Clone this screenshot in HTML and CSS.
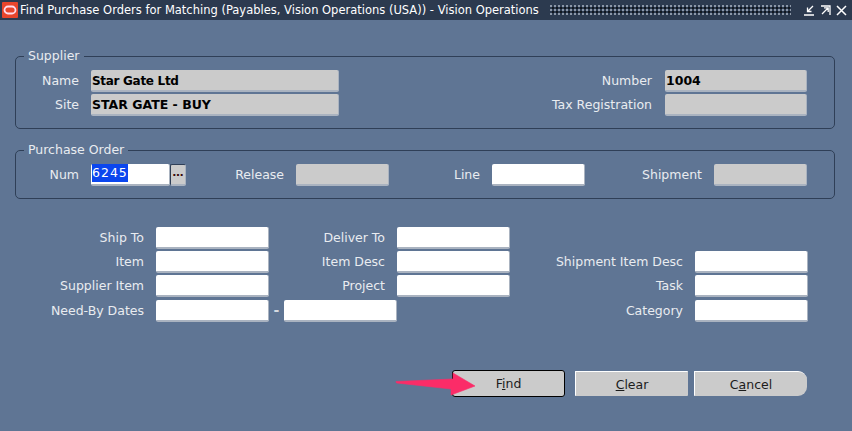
FILE: index.html
```html
<!DOCTYPE html>
<html lang="en">
<head>
<meta charset="utf-8">
<title>Find Purchase Orders for Matching</title>
<link rel="stylesheet" href="styles.css">
</head>
<body>
<div class="window">
  <header class="titlebar">
    <svg class="logo" width="16" height="16" viewBox="0 0 16 16"><rect width="16" height="16" rx="1" fill="#e8452c"/><rect x="2.500" y="4.500" width="11" height="7" rx="3.500" fill="none" stroke="#fde" stroke-width="1.800"/></svg>
    <span class="title">Find Purchase Orders for Matching (Payables, Vision Operations (USA)) - Vision Operations</span>
    <div class="grip"></div>
    <div class="winctl">
      <svg width="11" height="11" viewBox="0 0 11 11"><path d="M0 10h10M9 1L4 6M3.500 2.500v4h4" fill="none" stroke="#fff" stroke-width="1.300"/></svg>
      <svg width="11" height="11" viewBox="0 0 11 11"><path d="M1 1h9v9M2 9l6-6M4 2.800h4.200V7" fill="none" stroke="#fff" stroke-width="1.300"/></svg>
      <svg width="11" height="11" viewBox="0 0 11 11"><path d="M1 1l9 9M10 1l-9 9" fill="none" stroke="#fff" stroke-width="1.500"/></svg>
    </div>
  </header>
  <main class="content">
    <fieldset class="group supplier">
      <legend>Supplier</legend>
      <div class="group-grid">
        <label>Name</label><div class="field ro bold mixed">Star Gate Ltd</div>
        <label class="right-label">Number</label><div class="field ro bold">1004</div>
        <label>Site</label><div class="field ro bold">STAR GATE - BUY</div>
        <label class="right-label">Tax Registration</label><div class="field ro"></div>
      </div>
    </fieldset>
    <fieldset class="group po">
      <legend>Purchase Order</legend>
      <div class="po-row">
        <label class="l-num">Num</label>
        <div class="field num"><span class="sel">6245</span></div>
        <div class="lov">&#8230;</div>
        <label class="l-release">Release</label>
        <div class="field ro short"></div>
        <label class="l-line">Line</label>
        <div class="field short"></div>
        <label class="l-ship">Shipment</label>
        <div class="field ro short"></div>
      </div>
    </fieldset>
    <section class="criteria">
      <label>Ship To</label><div class="field"></div>
      <label>Deliver To</label><div class="field"></div>
      <span></span><span></span>
      <label>Item</label><div class="field"></div>
      <label>Item Desc</label><div class="field"></div>
      <label>Shipment Item Desc</label><div class="field"></div>
      <label>Supplier Item</label><div class="field"></div>
      <label>Project</label><div class="field"></div>
      <label>Task</label><div class="field"></div>
      <label class="dates">Need-By Dates</label><div class="field dates"></div>
      <div class="date-to"><span class="dash">-</span><div class="field"></div></div>
      <label class="dates">Category</label><div class="field dates"></div>
    </section>
    <div class="actions">
      <button class="btn default"><span>F<u>i</u>nd</span></button>
      <button class="btn"><span><u>C</u>lear</span></button>
      <button class="btn cancel"><span>C<u>a</u>ncel</span></button>
    </div>
  </main>
  <svg class="arrow" width="90" height="32" viewBox="0 0 90 32"><path d="M5 9.500L62 7 62 1 84 14 60 23 60 17 5.500 11z" fill="#fb2c68" stroke="#fb2c68" stroke-width="0.600" stroke-linejoin="round"/></svg>
</div>
</body>
</html>
```
FILE: styles.css
```css
* { box-sizing: border-box; }
html, body { margin: 0; height: 100%; }
body { background: #5f7594; font-family: "DejaVu Sans", sans-serif; font-size: 12px; color: #e9ecf0; overflow: hidden; }
.window { position: relative; width: 852px; height: 431px; background: #5f7594; }
.titlebar { display: flex; align-items: center; height: 20px; background: #2c3a4f; color: #fff; padding-left: 2px; }
.logo { flex: none; }
.title { margin-left: 2px; font-size: 11.500px; white-space: nowrap; width: 529px; }
.grip { width: 241px; height: 10px; margin-left: 1px; background-image: radial-gradient(circle at 1px 1px, #8d98a8 0.8px, transparent 1px), radial-gradient(circle at 1px 1px, #11171f 0.8px, transparent 1px); background-size: 4px 4px; background-position: 0 0, 2px 2px; }
.winctl { display: flex; gap: 5px; margin-left: 13px; }
.content { padding: 0 17px 0 15px; }
.group { margin: 0; padding: 0; border: 1px solid #2f3f57; border-radius: 5px; width: 820px; min-width: 0; }
.group legend { margin-left: 8px; padding: 0 4px; font-size: 12.500px; line-height: 16px; color: #e9ecf0; }
.supplier { margin-top: 28px; height: 81px; }
.group-grid { display: grid; grid-template-columns: 63px 248px 302px 142px; column-gap: 12px; row-gap: 3px; grid-auto-rows: 21px; margin-top: 6px; }
.group-grid .right-label { margin-right: 1px; }
label { display: flex; align-items: center; justify-content: flex-end; white-space: nowrap; font-size: 12.500px; }
.field { height: 22px; background: #fff; border-radius: 2px; border-right: 1px solid #aab3c0; border-bottom: 2px solid #aab3c0; color: #000; display: flex; align-items: center; padding-left: 1px; font-size: 12.500px; }
.ro { background: #cbcbcb; }
.bold { font-weight: bold; }
.mixed { font-size: 12px; letter-spacing: -0.3px; padding-top: 1px; }
.po { margin-top: 13px; height: 57px; }
.po-row { display: flex; align-items: flex-start; margin-top: 6px; }
.po-row label { height: 21px; }
.l-num { width: 63px; }
.num { margin-left: 12px; width: 79px; }
.sel { align-self: flex-start; background: #0b46ee; color: #fff; letter-spacing: 1px; line-height: 18px; }
.lov { width: 16px; height: 22px; background: #cbcbcb; border: 1px solid #2f3f57; border-right: 1px solid #aab3c0; border-bottom: 2px solid #aab3c0; border-radius: 2px; font-weight: bold; color: #3a0a0a; text-align: center; line-height: 16px; font-size: 11px; }
.short { width: 93px; }
.l-release { width: 98px; margin-right: 12px; }
.l-line { width: 91px; margin-right: 12px; }
.l-ship { width: 117px; margin-right: 12px; }
.criteria { display: grid; grid-template-columns: 129px 113px 104px 113px 161px 113px; column-gap: 12px; row-gap: 3px; grid-auto-rows: 21px; margin-top: 28px; }
.criteria .field { width: 113px; }
.criteria .dates { margin-top: 1px; }
.date-to { grid-column: 3 / 5; display: flex; align-items: flex-start; margin-top: 1px; margin-left: -12px; }
.dash { width: 15px; line-height: 21px; text-align: center; flex: none; color: #d5d9e0; font-weight: bold; font-size: 14px; }
.actions { display: flex; align-items: center; gap: 10px; margin-top: 50px; margin-left: 437px; }
.btn { width: 113px; height: 25px; padding: 0; background: #cbcbcb; border: 0; border-top: 1px solid #fff; border-left: 1px solid #fff; border-radius: 1px; color: #1c1c1c; font: 12.500px "DejaVu Sans", sans-serif; }
.btn.default { height: 27px; border: 1px solid #000; border-radius: 3px; }
.btn.cancel { margin-left: -4px; border-radius: 1px 9px 9px 1px; }
.arrow { position: absolute; left: 391px; top: 372px; }
```
